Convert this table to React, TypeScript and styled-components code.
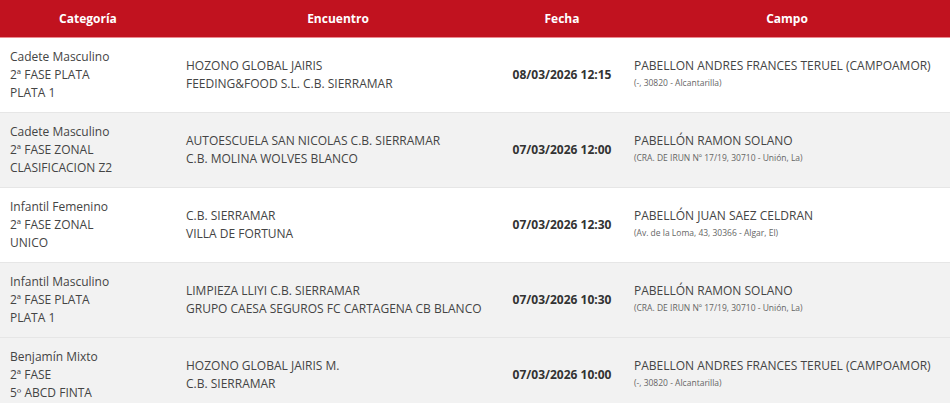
import React from "react"
import styled, { createGlobalStyle } from "styled-components"

const GlobalStyle = createGlobalStyle`
  body {
    margin: 0;
    background: #ffffff;
    font-family: "Open Sans", "Liberation Sans", sans-serif;
  }
  *, *::before, *::after {
    box-sizing: border-box;
  }
`

const Table = styled.table`
  width: 950px;
  border-collapse: collapse;
  table-layout: fixed;
  font-size: 12px;
  color: #444;
`

const Col = styled.col<{ $w: number }>`
  width: ${p => p.$w}px;
`

const HeadCell = styled.th`
  height: 37px;
  padding: 0 10px;
  background: #c1121f;
  border-bottom: 1px solid #ec8a90;
  color: #fff;
  font-weight: 700;
  font-size: 12px;
  text-align: center;
`

const Row = styled.tr<{ $alt: boolean }>`
  background: ${p => (p.$alt ? "#f2f2f2" : "#ffffff")};
  border-top: 1px solid #e6e6e6;
`

const Cell = styled.td`
  padding: 10px 10px;
  line-height: 18px;
  vertical-align: middle;
`

const DateCell = styled(Cell)`
  text-align: center;
  font-weight: 700;
  color: #333;
`

const Line = styled.div``

const Venue = styled.div`
  line-height: 18px;
`

const Address = styled.div`
  font-size: 8.5px;
  line-height: 14px;
  margin-top: 1px;
  margin-bottom: 2px;
  color: #666;
`

type Match = {
  cat: string[]
  teams: string[]
  date: string
  venue: string
  address: string
  alt: boolean
}

const matches: Match[] = [
  {
    cat: ["Cadete Masculino", "2ª FASE PLATA", "PLATA 1"],
    teams: ["HOZONO GLOBAL JAIRIS", "FEEDING&FOOD S.L. C.B. SIERRAMAR"],
    date: "08/03/2026 12:15",
    venue: "PABELLON ANDRES FRANCES TERUEL (CAMPOAMOR)",
    address: "(-, 30820 - Alcantarilla)",
    alt: false,
  },
  {
    cat: ["Cadete Masculino", "2ª FASE ZONAL", "CLASIFICACION Z2"],
    teams: ["AUTOESCUELA SAN NICOLAS C.B. SIERRAMAR", "C.B. MOLINA WOLVES BLANCO"],
    date: "07/03/2026 12:00",
    venue: "PABELLÓN RAMON SOLANO",
    address: "(CRA. DE IRUN Nº 17/19, 30710 - Unión, La)",
    alt: true,
  },
  {
    cat: ["Infantil Femenino", "2ª FASE ZONAL", "UNICO"],
    teams: ["C.B. SIERRAMAR", "VILLA DE FORTUNA"],
    date: "07/03/2026 12:30",
    venue: "PABELLÓN JUAN SAEZ CELDRAN",
    address: "(Av. de la Loma, 43, 30366 - Algar, El)",
    alt: false,
  },
  {
    cat: ["Infantil Masculino", "2ª FASE PLATA", "PLATA 1"],
    teams: ["LIMPIEZA LLIYI C.B. SIERRAMAR", "GRUPO CAESA SEGUROS FC CARTAGENA CB BLANCO"],
    date: "07/03/2026 10:30",
    venue: "PABELLÓN RAMON SOLANO",
    address: "(CRA. DE IRUN Nº 17/19, 30710 - Unión, La)",
    alt: true,
  },
  {
    cat: ["Benjamín Mixto", "2ª FASE", "5º ABCD FINTA"],
    teams: ["HOZONO GLOBAL JAIRIS M.", "C.B. SIERRAMAR"],
    date: "07/03/2026 10:00",
    venue: "PABELLON ANDRES FRANCES TERUEL (CAMPOAMOR)",
    address: "(-, 30820 - Alcantarilla)",
    alt: true,
  },
]

export default function App() {
  return (
    <>
      <GlobalStyle />
      <Table>
        <colgroup>
          <Col $w={176} />
          <Col $w={324} />
          <Col $w={124} />
          <Col $w={326} />
        </colgroup>
        <thead>
          <tr>
            <HeadCell>Categoría</HeadCell>
            <HeadCell>Encuentro</HeadCell>
            <HeadCell>Fecha</HeadCell>
            <HeadCell>Campo</HeadCell>
          </tr>
        </thead>
        <tbody>
          {matches.map((m, i) => (
            <Row key={i} $alt={m.alt}>
              <Cell>
                {m.cat.map(c => (
                  <Line key={c}>{c}</Line>
                ))}
              </Cell>
              <Cell>
                {m.teams.map(t => (
                  <Line key={t}>{t}</Line>
                ))}
              </Cell>
              <DateCell>{m.date}</DateCell>
              <Cell>
                <Venue>{m.venue}</Venue>
                <Address>{m.address}</Address>
              </Cell>
            </Row>
          ))}
        </tbody>
      </Table>
    </>
  )
}
